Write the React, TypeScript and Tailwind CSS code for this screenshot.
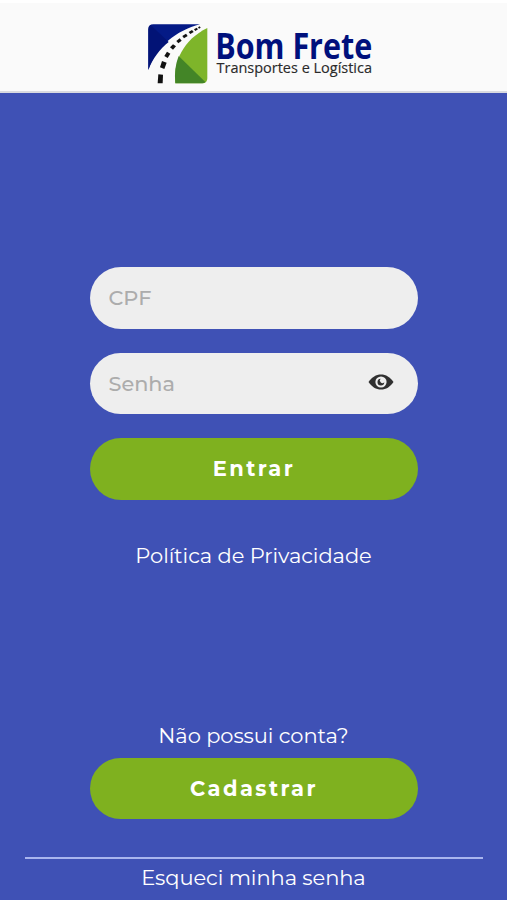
import type { ReactNode } from "react";

const sans = "font-['Montserrat','Inter',sans-serif]";

function RoadMark() {
  return (
    <svg viewBox="0 0 180 180" className="mt-[15px] h-[60px] w-[60px] flex-none" aria-hidden="true">
      <path d="M1 138V16Q1 1 16 1H156C85 20 25 66 1 138Z" fill="#041a86" />
      <path d="M1 138V16Q1 6 8 3L62 54C35 76 14 104 1 138Z" fill="#021376" />
      <path d="M178 12V163Q178 178 163 178H82C76 112 105 48 178 12Z" fill="#7eb52a" />
      <path d="M92 96L172 174Q169 178 163 178H82C79 148 82 121 92 96Z" fill="#438527" />
      <g fill="#111">
        <path d="M31 151L45 152L44 178H29Z" />
        <path d="M42 111L56 116L49 135L36 130Z" />
        <path d="M57 83L67 89L59 102L49 96Z" />
        <path d="M75 61L84 67L75 77L66 70Z" />
        <path d="M95 43L101 50L91 58L85 51Z" />
        <path d="M114 29L119 36L108 43L103 36Z" />
        <path d="M132 18L137 24L127 30L122 24Z" />
        <path d="M146 11L150 16L142 21L138 16Z" />
        <path d="M155 7L158 11L153 14L150 10Z" />
      </g>
    </svg>
  );
}

function Logo() {
  return (
    <div className="flex items-start gap-1">
      <RoadMark />
      <svg viewBox="-4 0 164 80" className="h-20 w-[164px]" role="img" aria-label="Bom Frete">
        <g fontFamily="'Open Sans', sans-serif">
          <text x="-0.8" y="50" fontSize="35" fontWeight="700" fill="#00107c" textLength="157" lengthAdjust="spacingAndGlyphs">
            Bom Frete
          </text>
          <text x="0.5" y="64.4" fontSize="14.2" fill="#2a2a2a" stroke="#2a2a2a" strokeWidth="0.15" textLength="155.5" lengthAdjust="spacingAndGlyphs">
            Transportes e Logística
          </text>
        </g>
      </svg>
    </div>
  );
}

function EyeIcon() {
  return (
    <svg viewBox="0 0 26 16" className="mb-0.5 h-4 w-[26px]" aria-hidden="true">
      <path d="M.5 8C4 3 8 .5 13 .5S22 3 25.5 8C22 13 18 15.5 13 15.5S4 13 .5 8Z" fill="#303030" />
      <circle cx="13" cy="8" r="5.6" fill="#eee" />
      <path d="M12.6 4.7A3.4 3.4 0 1 0 16.3 8.3A2.1 2.1 0 0 1 12.6 4.7Z" fill="#303030" />
    </svg>
  );
}

function Field({ label, type, children }: { label: string; type: string; children?: ReactNode }) {
  return (
    <div className="flex h-[61.5px] items-center rounded-full bg-[#eee] pr-6 pl-[19px]">
      <input
        type={type}
        placeholder={label}
        className="min-w-0 flex-1 bg-transparent pt-px text-[20.8px] font-medium outline-none placeholder:text-[#acacac]"
      />
      {children}
    </div>
  );
}

function Button({ children }: { children: ReactNode }) {
  return (
    <button className="h-[61.5px] w-full rounded-full bg-[#7fb11f] pt-px pl-px text-[21px] font-bold tracking-[2.4px] text-white">
      {children}
    </button>
  );
}

export default function App() {
  return (
    <div className={`flex h-[900px] w-[507px] flex-col overflow-hidden bg-[#3f51b5] ${sans}`}>
      <header className="flex h-[93px] flex-none justify-center border-t-[3px] border-b-2 border-t-white border-b-[#d9dae0] bg-[#fafafa] pt-1.5 pl-4">
        <Logo />
      </header>
      <main className="flex flex-1 flex-col items-center text-[21px] leading-7 text-white">
        <form className="mt-[174px] flex w-[328px] flex-col gap-6">
          <Field label="CPF" type="text" />
          <Field label="Senha" type="password">
            <EyeIcon />
          </Field>
          <Button>Entrar</Button>
        </form>
        <a className="mt-[42px] tracking-[-0.08px]">Política de Privacidade</a>
        <p className="mt-[152px] tracking-[-0.08px]">Não possui conta?</p>
        <div className="mt-2 w-[328px]">
          <Button>Cadastrar</Button>
        </div>
        <hr className="mt-[38px] w-[458px] border-t-2 border-[#a9b5ee]" />
        <a className="mt-[5px] tracking-[-0.08px]">Esqueci minha senha</a>
      </main>
    </div>
  );
}
